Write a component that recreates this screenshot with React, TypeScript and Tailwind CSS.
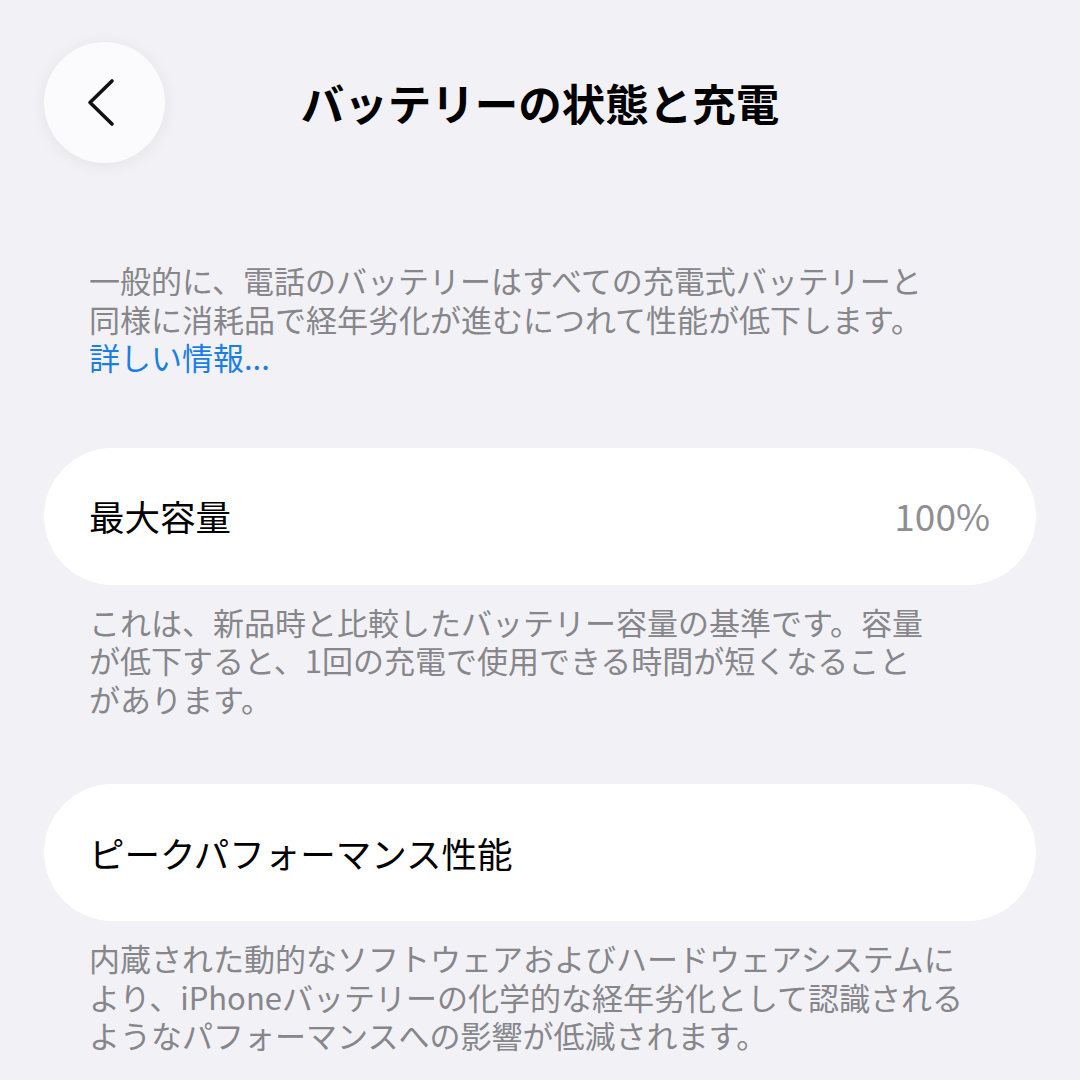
import React from 'react';

const jp = { fontFamily: '"Noto Sans CJK JP", "Noto Sans", sans-serif' };

const BackButton: React.FC = () => (
  <button className="w-[121px] h-[121px] rounded-full bg-[#fbfbfd] flex items-center justify-center shadow-[0_2px_18px_rgba(0,0,0,0.06)]">
    <svg width="121" height="121" viewBox="0 0 121 121" fill="none">
      <path d="M68 39 L46 60.5 L68 82" stroke="#111" strokeWidth="3.6" strokeLinecap="round" strokeLinejoin="round" />
    </svg>
  </button>
);

const Footnote: React.FC<{ children: React.ReactNode; className?: string }> = ({ children, className }) => (
  <p className={`px-[45px] text-[31px] leading-[38.5px] text-[#86868b] whitespace-nowrap ${className ?? ''}`}>{children}</p>
);

const Row: React.FC<{ label: string; value?: string; className?: string }> = ({ label, value, className }) => (
  <div className={`h-[137px] rounded-full bg-white flex items-center justify-between pl-[45px] pr-[46px] ${className ?? ''}`}>
    <span className="text-[35.5px] text-black">{label}</span>
    {value && <span className="text-[37px] text-[#8e8e93]">{value}</span>}
  </div>
);

const App: React.FC = () => {
  return (
    <div className="w-[1080px] h-[1080px] overflow-hidden bg-[#f2f2f6] px-[44px] pt-[42px]" style={jp}>
      <div className="grid grid-cols-[121px_1fr_121px] items-center">
        <BackButton />
        <h1 className="text-center text-[43.5px] font-bold text-black">バッテリーの状態と充電</h1>
        <div />
      </div>

      <Footnote className="mt-[98px]">
        一般的に、電話のバッテリーはすべての充電式バッテリーと<br />
        同様に消耗品で経年劣化が進むにつれて性能が低下します。<br />
        <span className="text-[#1a7ee6]">詳しい情報...</span>
      </Footnote>

      <Row label="最大容量" value="100%" className="mt-[71px]" />

      <Footnote className="mt-[18px]">
        これは、新品時と比較したバッテリー容量の基準です。容量<br />
        が低下すると、1回の充電で使用できる時間が短くなること<br />
        があります。
      </Footnote>

      <Row label="ピークパフォーマンス性能" className="mt-[66px]" />

      <Footnote className="mt-[18px]">
        内蔵された動的なソフトウェアおよびハードウェアシステムに<br />
        より、iPhoneバッテリーの化学的な経年劣化として認識される<br />
        ようなパフォーマンスへの影響が低減されます。
      </Footnote>
    </div>
  );
};

export default App;
